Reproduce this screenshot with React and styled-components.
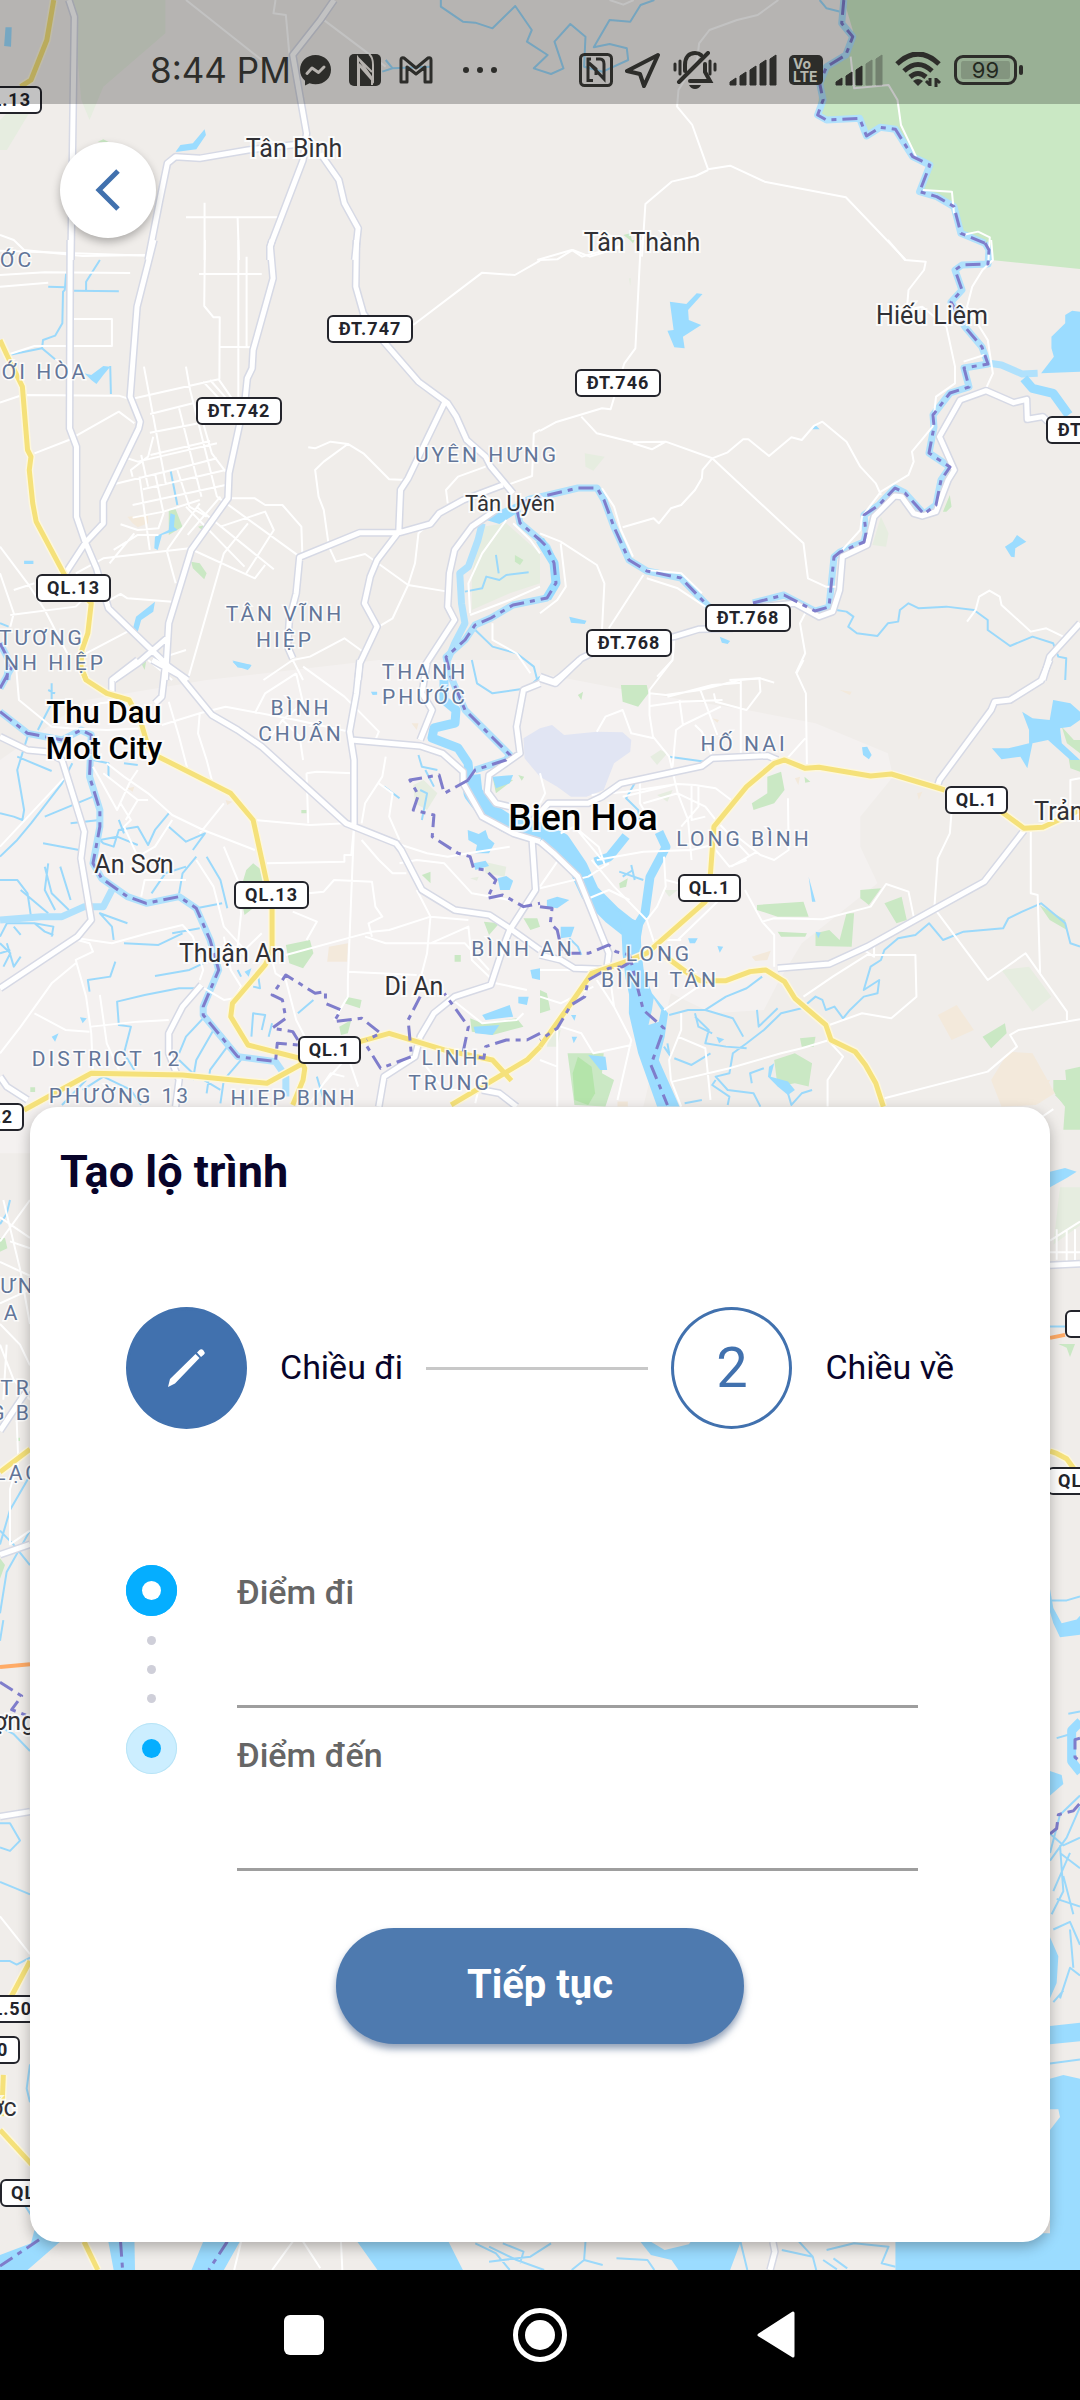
import React from "react";
import styled, { createGlobalStyle } from "styled-components";

const GlobalStyle = createGlobalStyle`
  *, *::before, *::after { box-sizing: border-box; }
  body { margin: 0; background: #f0edea; font-family: Roboto, "Liberation Sans", sans-serif; }
  button, input { font: inherit; }
`;

/* ---------- map data: each tile has an origin and a scale ---------- */

const TILES = [
  {
    id: "north", x: 0, y: 0, sx: 0.6888, sy: 0.3333,
    park: "M1225,0 1238,90 1240,130 1228,165 1195,200 1190,260 1187,345 1197,365 1248,355 1258,408 1278,382 1300,385 1325,470 1350,495 1335,575 1385,605 1395,700 1437,740 1439,780 1568,807 1568,0ZM142,425 150,418 160,428ZM905,705 915,700 918,725Z",
    pale: "M105,0 240,0 240,100 150,260 130,360 118,300ZM10,340 45,330 10,450 0,450 0,360Z",
    water: "M255,455 262,435 280,430 297,388 299,405 285,448 258,455ZM8,82 17,82 16,140 6,138Z",
    stream: "M640,0 640,20 672,65 690,68 715,85 748,18 772,90 765,125 795,165 775,205 800,222 818,205 805,125 828,72 850,110 848,200 875,215 912,180 910,145 885,132 862,142 885,60 915,65 930,15 950,0M1190,0 1200,25 1220,35M560,180 570,205 625,200M555,215 570,205",
    river: "M1225,0 1222,70 1238,110 1228,165 1200,200 1190,250 1195,300 1187,345 1200,360 1248,355 1258,408 1278,382 1300,388 1325,470 1350,495 1335,575 1360,590 1385,620 1395,700 1430,730",
    border: "M1225,0 1222,70 1238,110 1228,165 1200,200 1190,250 1195,300 1187,345 1200,360 1248,355 1258,408 1278,382 1300,388 1325,470 1350,495 1335,575 1360,590 1385,620 1395,700 1430,730",
    major: "M100,0 108,50 103,780M485,0 465,60 425,165 445,400 440,480 392,740 392,780M445,430 360,450 290,475 255,470 243,490 232,600 215,780M465,460 492,540 500,610 520,685 515,780",
    yellow: "M78,0 68,120 45,240 30,260",
    minor: "M270,0 380,180M400,0 397,40 415,45 420,160M467,55 560,200M1130,0 1100,45 1070,60 1030,90 1015,130 1012,180 985,270 983,320 1005,375 1028,508 1060,497 1110,545 1228,592 1315,780M1028,510 1010,528 975,545 937,612 932,770M297,608 297,780M270,652 407,652M345,655 347,780M0,705 20,720 35,750 120,768 213,765M1235,170 1240,265 1290,255 1303,300 1308,375 1330,470M1340,570 1382,575 1385,640M1398,705 1420,695 1437,712 1435,780M780,780 830,750 845,770 905,735M885,0 905,14 920,0",
  },
  {
    id: "west", x: 0, y: 240, sx: 0.3444, sy: 0.3333,
    park: "M490,810 510,808 530,860 490,885ZM555,965 580,970 600,1000 593,1018 560,985ZM1495,945 1520,960 1510,975 1495,965ZM410,1270 425,1260 420,1290ZM575,860 595,855 590,872Z",
    pale: "M1400,860 1470,850 1568,940 1568,1030 1480,1060 1370,1110 1370,1000Z",
    sand: "M370,830 430,825 430,850 400,862 385,850Z",
    water: "M245,400 265,405 300,378 320,380 300,405 280,432 265,420ZM495,820 508,825 505,860 515,870 470,885 458,930 448,925 450,890 490,870ZM450,1085 445,1115 410,1140 400,1175 385,1170 395,1130ZM675,1262 730,1275 725,1285 690,1283ZM70,962 97,962 97,972 70,972ZM1395,835 1430,820 1510,785 1500,820 1450,852Z",
    stream: "M290,60 250,125 250,150M215,152 345,154M140,140 190,142M192,100 188,150 183,155 181,250 160,287 125,300 122,325 25,345M122,325 160,358M213,237 300,237M320,378 322,462M495,690 515,795M1350,1055 1400,1045 1412,1010 1450,1020 1470,1005 1535,997M1440,945 1448,1000M0,1150 25,1160M1380,1170 1430,1220 1500,1240 1550,1280 1560,1320",
    river: "M1400,850 1388,900 1360,980 1335,1000 1340,1090 1350,1150 1320,1210 1300,1260M0,1210 25,1260 20,1320",
    border: "M0,1210 25,1260 20,1320",
    major: "M204,0 202,565 222,620 222,830 245,900 280,985 315,1105 490,1280 545,1320M447,0 398,200 378,470 407,545 403,565 300,785 300,850 250,905 190,1000M790,0 785,20 793,115 735,330 732,385 718,415 712,475 665,700 662,775 555,930 490,1150 480,1320M1035,0 1033,140 1055,220 1110,300 1215,425 1300,490 1325,530 1355,600 1410,650 1425,680 1490,760M1290,490 1185,715 1163,750 1158,875 1095,960 1075,1010 1058,1090 1095,1160 1045,1270 1040,1320M1158,878 1045,878 870,952 860,1060 840,1140 835,1220 850,1255M1160,878 1250,852 1275,820 1345,780 1460,735M1440,810 1370,860 1320,930 1305,1000 1300,1100 1320,1140 1235,1275M490,1190 400,1270 330,1320",
    yellow: "M0,300 20,345 65,440 80,630 90,650 85,690 95,790 105,845 190,1010 265,1090 255,1180 238,1230 235,1280 250,1320",
    minor: "M0,105 130,97 378,99M0,140 140,128M0,32 430,47M0,488 65,465 345,467 378,478 635,418 690,500M637,418 638,232 620,232 593,198 595,0M692,0 692,470M716,50 716,320M578,102 760,102M640,320 735,322M213,237 325,237 325,318 100,318 20,345M100,640 200,600 345,515 390,550M418,380 482,735M540,380 552,450 630,770M590,550 615,640 655,695M520,505 585,770M436,522 560,490M435,578 600,545M437,645 610,603M370,655 400,665 630,610M333,732 500,690 630,655M415,748 655,690M385,795 655,735M405,710 435,930M410,645 430,740M445,590 430,650 380,690 385,710M350,853 400,870 460,865 475,820 450,700M385,833 475,815 580,780M330,930 400,885 460,885M318,970 390,880M540,800 710,980M570,800 795,988M560,930 740,1015 770,975M485,930 580,790M545,885 640,770M515,690 550,800 600,830M630,770 870,950M655,775 740,775 770,795 820,795 875,860 878,945M640,860 770,815 795,870 740,960 715,1000M720,850 650,940 545,1320M220,1000 300,955 550,925M485,935 510,1030M500,1085 370,1075 350,1062 310,1085M895,622 915,625 960,605 1010,612 1055,640 1130,718 1180,720M1010,612 940,665 915,690 925,770 940,810 955,920 975,965 1060,942 1185,1035 1300,1055M1200,255 1400,98 1495,105 1568,62M1100,1160 1140,1135 1185,1035 1205,970 1215,880 1270,830M1300,790 1295,750 1330,710 1410,680M1460,740 1545,708 1550,580 1568,570M0,920 80,1030 130,1110 195,1240M0,1000 20,1060 40,1120 30,1160M30,1125 220,1100 260,1060M40,1050 100,1030M250,1240 370,1175M590,425 640,480M610,420 670,490M765,1320 850,1260 900,1250 1000,1195 1060,1240M850,1260 880,1320M1470,840 1400,940 1360,1030 1365,1120M1490,850 1540,900 1568,940M1365,1125 1480,1080 1568,1040M1430,1150 1430,1200 1500,1240 1540,1300M480,1250 540,1230",
  },
  {
    id: "east", x: 540, y: 240, sx: 0.3444, sy: 0.3333,
    park: "M1170,815 1190,765 1195,800 1180,815ZM262,0 275,0 270,10Z",
    pale: "M965,915 990,830 1012,880 1005,920ZM130,640 188,650 155,692 132,680ZM258,115 264,115 262,138Z",
    water: "M377,185 425,192 455,160 472,162 430,210 432,240 468,255 415,290 420,325 390,322 370,272 388,270ZM1568,215 1545,212 1525,225 1525,250 1485,290 1485,325 1492,350 1455,400 1568,395ZM1350,920 1372,905 1385,885 1412,905 1380,925 1378,952 1368,950ZM790,568 800,555 812,568ZM85,1130 135,1142 130,1152 90,1148ZM522,1190 552,1203 545,1212 528,1208Z",
    stream: "M860,1110 890,1115 910,1130 895,1160 920,1180 980,1188 1010,1150 1040,1145 1045,1110 1070,1090 1100,1105 1180,1100 1260,1110 1300,1140 1300,1170 1365,1218 1430,1190 1490,1210 1505,1250 1528,1255 1525,1320",
    river: "M1305,370 1340,375 1400,402 1445,400",
    wide: "M1405,415 1430,445 1490,460 1535,525",
    major: "M0,1310 40,1325 60,1310 120,1255 200,1215 390,1190 460,1168 560,1165M640,1100 740,1090 810,1130 850,1115 870,1050 878,950 950,915 970,830 1030,768 1050,770 1085,820 1110,828 1150,815 1185,720 1203,690 1160,590 1220,480 1295,452 1375,488 1413,478 1415,538 1460,530 1475,545M1568,1150 1480,1250 1460,1320",
    minor: "M0,573 45,547 180,505 205,508 245,370 277,325 293,0M120,530 165,580 270,607 365,605 500,655 765,910 778,1015 830,1040 870,1040M270,610 325,628 365,605M500,655 545,637 590,598 605,598 665,648 730,592 760,600 795,558 820,545 890,605 930,680 975,730 990,765M500,655 472,690 470,715 450,750 410,795 380,805 345,850 330,835 240,862M0,60 50,58 95,30 145,50 240,20M1010,0 1060,60 1120,65 1115,90 1070,150 1065,210 1110,200 1180,260 1205,380 1205,430 1150,470 1140,560 1080,635 1085,665 1070,705 990,755 935,830 930,870 860,950M1310,0 1315,60 1285,90 1255,140 1240,200 1300,300 1315,400 1295,445M1230,365 1290,345M0,880 60,905 165,975 187,1030 180,1170M60,910 75,1040 50,1080 0,1120M300,1005 200,1165M180,745 215,800 235,870 270,950M310,1015 400,1045 480,1100M770,1120 755,1150 770,1240 743,1300M390,1200 385,1260 340,1310M1240,1145 1265,1110 1275,1070 1305,1052 1335,1070 1340,1095 1425,1175 1470,1165 1530,1195M550,1320 640,1315M310,990 410,1000 470,1060",
  },
  {
    id: "southwest", x: 0, y: 660, sx: 0.3444, sy: 0.3333,
    urban: "M0,300 250,120 600,60 1100,0 1568,0 1568,1480 0,1480Z",
    park: "M735,610 760,630 775,665 705,665 715,630ZM705,740 740,740 710,765ZM830,855 900,840 910,880 880,925 840,910ZM1225,645 1250,635 1250,670ZM1405,785 1450,790 1420,825ZM1520,775 1560,775 1568,800 1540,810ZM1005,1010 1050,1020 1045,1045 1000,1030ZM985,1100 1020,1080 1010,1120 990,1125ZM1365,1075 1400,1090 1500,1075 1520,1100 1430,1125 1370,1115ZM1430,350 1440,400 1490,360ZM1320,885 1338,885 1338,905 1320,905ZM875,450 890,450 890,460 875,460ZM88,1282 102,1282 102,1296 88,1296ZM1505,345 1522,350 1515,362Z",
    pale: "M1200,375 1230,360 1270,400 1240,450 1205,430ZM1405,605 1470,620 1465,650 1410,640ZM1365,655 1390,650 1385,662Z",
    sand: "M955,860 1010,850 1008,905 950,905ZM370,385 390,380 385,395ZM655,420 675,425 660,435ZM1195,190 1215,190 1210,210Z",
    water: "M1358,510 1390,522 1410,510 1418,535 1436,550 1420,580 1380,580 1385,555 1360,540ZM1445,655 1470,648 1490,662 1480,690 1452,690ZM1430,350 1490,345 1480,370 1440,385ZM1400,1065 1480,1035 1490,1070 1410,1080ZM1375,1100 1450,1095 1430,1125 1380,1120ZM1505,1010 1535,1010 1530,1035 1505,1030ZM1540,930 1568,925 1568,960 1545,955ZM675,5 730,15 720,30 690,20ZM232,1072 252,1075 240,1090ZM150,1130 170,1120 160,1145ZM1375,610 1410,602 1420,618 1380,630ZM1077,95 1095,95 1095,104 1082,105ZM710,935 730,925 722,950Z",
    stream: "M0,460 40,470 65,480 70,450 50,330 80,230M0,590 50,540 90,490 180,370 210,310M50,290 150,333M205,490 290,480M125,550 230,570M130,470 270,410M0,830 20,790 100,790 155,800 150,830M20,850 40,920 60,890M0,660 50,660 80,700 90,770M60,690 140,760M130,620 150,700 200,750M175,620 205,720M140,610 130,690 160,750M100,790 130,815 155,825M40,800 60,825M290,540 300,550 330,560 345,510 400,500 430,555 450,510 490,460M290,540 340,530 400,555M345,480 360,520M490,500 540,545 595,520 560,570M570,590 530,640 520,700M600,590 640,660 660,745M570,745 645,730M440,700 480,640 540,620M360,850 460,855 530,820M580,805 500,820M450,948 550,930 590,910M335,905 320,950 255,960 260,995M590,985 520,985 420,1005 340,1025 345,1095 380,1100 360,1180 390,1230M330,840 325,800 290,760 370,790M730,1130 735,1060 770,1065 760,1110M780,1130 790,1090M735,980 755,985 750,950M690,930 700,950M865,1060 910,1020M240,1290 300,1250 380,1290 410,1335M590,1075 540,1130 520,1180M620,1110 570,1200 560,1260M660,1160 610,1230 600,1300M700,1200 650,1260 640,1330M180,1335 250,1260M920,1250 940,1320M1115,380 1160,415M1215,285 1225,320 1270,330M1220,390 1240,400 1225,480M1235,330 1260,380M110,210 150,130 150,70M140,90 160,100M1370,0 1385,70 1430,100 1530,85 1568,50M270,300 315,310 315,350M0,850 30,880 10,920M360,310 400,315M0,880 30,870M520,1200 560,1240 640,1290",
    river: "M0,85 35,20M0,155 80,220 180,240 235,210 265,225 260,350 290,450 290,500 270,610 295,655 370,710 425,730 520,710 570,745 610,840 635,930 590,1040 590,1065 690,1190 800,1205 830,1250 830,1310M0,780 120,770 180,770 245,740 300,740 325,690",
    border: "M0,85 35,20M0,155 80,220 180,240 235,210 265,225 260,350 290,450 290,500 270,610 295,655 370,710 425,730 520,710 570,745 610,840 635,930 590,1040 590,1065 690,1190 800,1205 805,1150 865,1155M865,1140 850,1115 790,1105 830,1075 820,1020 790,1005 830,945 915,1000 945,995 945,1030 990,1050 970,1085 1050,1075 1105,1120 1065,1140M1360,360 1290,400 1275,345 1190,360 1215,405 1200,450 1260,465 1255,530 1330,580 1365,590 1375,625 1410,630 1440,660 1415,715 1460,705 1520,740 1568,730M1568,1120 1530,1140 1470,1140 1410,1160 1405,1195 1390,1192M1345,1175 1360,1100 1290,1000M1220,1010 1185,1080 1195,1190 1105,1225 1060,1150",
    major: "M442,0 520,45 615,165 690,210 760,260 1005,490 1150,550 1165,570 1225,690 1320,750 1420,765 1480,805 1568,870M482,0 470,110 450,130M400,0 325,60 325,95M1045,0 1035,100 1015,215 1028,300 1028,500M1020,240 1220,258 1285,280 1345,335 1345,370 1400,470 1490,520 1568,545M1240,10 1225,100 1255,150 1220,240M1568,70 1520,90 1500,200 1510,280 1420,345 1415,395 1440,430 1480,440M1545,540 1555,690 1480,810 1465,850 1425,975 1320,1010 1260,1060 1220,1130 1205,1190 1115,1250 1100,1340M0,230 80,270 135,275 180,300 245,515 235,595 265,780 225,830 0,985M585,975 530,1040 490,1120 490,1180 520,1260 510,1340M0,1250 20,1280 80,1320M1400,1290 1450,1300 1500,1340",
    yellow: "M240,35 250,60 310,100 375,120 410,190 430,260 460,290 670,400 735,480 790,740 790,870 770,915 675,1030 670,1070 720,1155 870,1195 885,1225 880,1260 850,1335M70,1350 185,1285 265,1240 530,1245 775,1270 880,1210M1045,1145 1130,1120 1290,1170 1430,1200 1485,1262M1310,1335 1530,1200 1568,1160",
    minor: "M45,0 55,120 150,200 200,205 310,210 420,205M225,160 290,130 375,120M470,195 580,160 655,140 860,180 1015,215M490,125 520,230 545,330M580,160 575,220 600,300 620,380M310,310 360,350 430,400 500,465 590,510 740,570M270,320 340,450 380,360 400,330M365,480 400,420 430,420M350,430 380,480 360,500 400,590M500,480 450,560 400,590M650,430 580,520M740,480 900,495 1005,490M860,40 770,100 740,160M860,40 880,130 820,180 780,240M880,20 1000,110 1100,215 1090,240M820,180 870,230 880,300M890,340 920,335 1025,340M890,340 895,490M1120,290 1110,350 1060,430 1050,490M1100,370 1140,400 1130,470 1160,540M775,610 1000,605 1000,585 1020,585 1028,500 1010,960 1010,1010 970,1080M895,700 940,695 970,660 1080,665 1090,740 1110,770 1070,790 1080,830M830,885 1080,815 1130,810 1250,770 1360,780M1060,830 1120,850 1350,850 1420,930M850,755 920,785 890,840M1150,550 1240,580 1300,590 1360,580 1480,560M1160,610 1210,600 1290,610 1370,700 1480,720M1210,690 1250,770 1240,880 1210,1000M1250,850 1360,800 1370,900 1440,970 1530,990M1010,935 1210,945M1050,540 1100,600 1140,640 1180,640M650,560 690,660 700,760 690,860 720,900M570,600 620,680 650,800 720,880M430,820 530,795 560,830 590,930 580,960M225,835 325,850 430,820M225,840 260,850 270,875 220,900 250,1010 265,1120 270,1240M220,910 150,970 60,1100 0,1180M100,1060 190,1110 260,1115M265,1100 400,1085 490,1080M290,1005 310,1150 350,1240M0,560 190,350M410,710 420,660 540,660M585,980 650,1020 680,1015 700,980 670,930 650,830M830,960 860,1080 890,1140M790,900 800,940 830,960M760,820 700,880M1290,1000 1400,1090 1500,1080 1520,1060M940,1270 1010,1190 1040,1280M900,1330 960,1240 1000,1250M1230,1210 1290,1290 1340,1290M1400,1240 1380,1330M300,340 400,420M430,0 500,60",
  },
  {
    id: "southeast", x: 540, y: 660, sx: 0.3444, sy: 0.3333,
    urban: "M0,40 300,100 600,150 800,190 1010,280 1025,350 930,470 930,560 980,670 760,850 690,970 650,1050 500,1060 380,1000 300,1340 0,1340Z",
    lavender: "M-48,235 0,205 35,195 70,225 165,215 240,217 265,240 262,275 215,310 185,390 135,410 90,410 50,380 0,350 -45,295Z",
    park: "M235,75 310,75 315,100 285,140 240,125ZM110,105 125,95 120,120ZM660,350 700,335 710,390 680,430 620,450 615,430 660,400ZM630,735 765,725 780,770 690,770 630,750ZM690,815 775,820 770,830 700,830ZM890,760 912,760 905,860 800,858 800,820 840,810 870,840ZM930,690 990,685 955,735 930,715ZM1000,730 1050,710 1065,780 1035,790ZM1285,1130 1350,1090 1355,1120 1310,1165ZM80,1180 185,1180 180,1240 215,1260 190,1340 100,1335ZM680,1200 740,1180 790,1210 780,1280 740,1270 690,1280ZM1568,1220 1525,1230 1530,1290 1495,1305 1568,1380ZM1340,1220 1370,1190 1418,1265 1390,1260ZM1515,200 1550,240 1568,240 1568,280 1530,250ZM1535,295 1568,300 1568,335 1540,325ZM1450,735 1525,780 1530,810 1480,780ZM755,1135 800,1130 795,1160 760,1160ZM0,990 20,1000 30,1050 0,1060ZM230,670 255,655 250,680 232,685ZM768,350 785,365 770,368Z",
    deep: "M110,1190 150,1220 160,1300 140,1335 100,1320 95,1240Z",
    pale: "M1340,930 1420,920 1485,1010 1430,1055ZM320,290 350,270 370,280 340,315ZM340,405 385,390 370,425ZM360,690 400,690 375,710ZM25,1120 60,1110 50,1160 20,1160Z",
    sand: "M1155,1065 1210,1035 1260,1110 1195,1140ZM1310,1260 1360,1175 1430,1180 1495,1300 1440,1335 1340,1340ZM615,890 670,872 660,900 625,903ZM870,90 905,95 900,105ZM1095,400 1110,395 1100,420ZM500,175 520,180 515,188ZM740,355 755,350 750,375ZM225,1325 255,1325 255,1340 225,1340Z",
    water: "M1400,155 1430,175 1480,180 1490,120 1540,130 1568,155 1568,180 1540,200 1510,205 1515,250 1568,300 1540,300 1475,240 1430,250 1415,325 1395,290 1340,298 1312,265 1360,265 1420,250 1420,210ZM935,262 950,260 963,285 955,298 938,285ZM20,720 50,710 85,720 50,745 20,740ZM60,800 100,800 90,830 60,835ZM430,835 458,835 450,850 435,850ZM515,858 532,860 522,878ZM780,650 800,725 790,725ZM140,1185 190,1190 195,1230 175,1230ZM260,930 300,930 325,1000 372,1060 362,1130 345,1200 405,1340 340,1340 285,1180 258,1060ZM135,640 150,690 230,760 245,880 285,880 300,790 250,770 165,705ZM90,1065 105,1065 100,1082ZM92,1130 108,1130 98,1150ZM512,1130 535,1138 520,1150ZM665,1220 680,1210 670,1250 720,1265 740,1290 720,1305 690,1280 662,1250ZM800,815 815,818 808,835Z",
    island: "M330,1015 352,1050 345,1085 315,1095 325,1050Z",
    stream: "M1568,860 1540,850 1525,790 1455,730 1400,755 1360,775 1345,805 1230,815 1170,840 1130,790 1090,825 1040,835 1000,870 990,900 960,920 940,990 985,960 980,1000 940,1010 900,1050 880,1075 855,1040 830,1050 820,1020 800,1010 760,1045 700,1060 650,1110 600,1150 560,1180 550,1240 510,1250 545,1290 620,1300 640,1340M510,1260 500,1275 550,1310 545,1335M375,1065 430,1050 480,1050 560,1075 590,1130M450,1070 490,1110 480,1150 540,1160 600,1165M450,1060 460,1100 500,1120M480,1050 540,1010 600,985 645,950M630,1050 635,1100 690,1045M390,1195 440,1215 495,1180M720,1300 730,1335 760,1300 790,1290M615,1270 610,1240 650,1225M420,1330 470,1320M375,290 480,305M275,370 250,415 285,450 290,480M230,635 300,660M265,615 275,660M240,650 270,630M360,1160 380,1190M370,1150 375,1180M85,835 110,860 120,885",
    border: "M0,740 35,745 30,790 50,810 65,880 140,880 200,855 220,875 260,885 280,970 300,1050 360,1105 322,1215 370,1335M265,905 240,920 200,925 140,960 130,1010 90,1035 50,1105 0,1140",
    major: "M0,55 45,70 115,0M-20,480 25,430 140,430 180,410 235,370 470,318 500,295 660,287 690,300M0,545 40,580 110,650 200,880 195,920M0,885 60,900 100,925 180,928M690,925 840,912 950,860 1150,745 1290,665 1405,512M1155,375 1160,360 1310,150 1320,125 1365,120 1455,62 1480,0",
    yellow: "M0,1160 90,1030 150,940 250,905 310,880 480,725 495,640 505,500 600,380 680,310 710,300 770,325 810,322 960,348 1020,342 1175,390M1340,455 1405,505 1460,502 1568,450M365,890 430,940 465,962 540,962 610,935 655,930 710,965 740,1015 830,1095 845,1140 915,1175 945,1215 975,1270 997,1340",
    minor: "M385,0 318,90 318,165 328,230 375,290 400,400M318,100 365,105 465,90 580,60 640,55 680,68M320,138 405,125 530,120M370,110 500,75 585,68M465,88 515,225M583,60 583,285M405,120 415,195 395,210 385,320M415,195 525,140M505,100 510,125 600,150 640,95 637,55M765,0 745,40 772,100 775,320M718,295 770,235M165,215 190,170 240,150 265,220 330,235M450,195 470,215 500,290M150,405 250,395 400,372 450,375 510,385 555,420M240,410 385,375M290,360 290,430 330,500M300,430 400,400 480,440 510,480 610,590M400,400 430,480 440,600M440,375 440,480 480,470M460,380 460,440 410,500M555,620 630,575M720,415 722,570 680,600 640,585 560,520M165,600 300,575 440,570 500,555M365,660 440,680M360,590 365,680 340,740 310,780 335,860M150,600 215,680 310,780M100,500 180,600M60,520 100,500 170,560 190,620M595,690 645,785 680,825 680,920M645,785 680,775 820,778 960,740 1005,672 1070,695 1085,770M400,840 520,720 580,680M335,840 410,840M1195,455 1190,520 1155,595 1145,745 1300,960 1410,880 1530,1055 1530,1080M1425,510 1425,700 1445,705 1452,940M1568,1078 1390,1110 1365,1125 1385,1160 1300,1235 1000,1315M765,1010 850,950 950,885 1090,885 1093,1010 1020,1075 935,1060 840,1095M400,1130 480,1165 495,1320M385,1265 550,1225 700,1180 760,1165 840,1140M840,1145 880,1190 835,1260 835,1340M410,1060 410,1110 375,1200 380,1260 410,1340M165,960 215,1040 265,1140 225,1320M60,1100 120,1120 155,1180 265,1155M50,1110 50,1340M0,680 60,590M0,685 140,650 200,610M130,720 200,690 260,720M940,870 970,890 970,850M360,1050 460,980M1540,440 1540,360 1568,355M0,340 15,400 0,430M510,570 550,620 600,600M0,930 60,930 200,930 215,1040M0,1200 50,1220M155,980 60,1030 0,1010",
  },
  {
    id: "left-edge", x: 0, y: 1200, sx: 0.3333, sy: 0.6888,
    park: "M0,55 15,55 22,70 0,75ZM0,520 15,530 0,550ZM50,345 60,345 60,350 50,350Z",
    minor: "M0,60 90,0M0,90 90,110M0,180 60,210 90,240M10,0 60,100 90,180M0,210 40,260 90,290M0,1040 90,1095M50,320 55,380 30,420 30,500 90,480M0,150 90,130M30,60 90,70M0,25 90,55M20,210 10,290",
    major: "M0,515 90,500M0,335 90,270M0,895 90,888",
    yellow: "M0,395 90,362M30,1160 90,1105M0,1350 95,1400M10,1270 5,1330",
    orange: "M0,678 90,674",
    stream: "M0,35 20,20 30,0M0,600 20,540 90,480M0,500 30,450 90,400M0,480 40,500 90,530M0,905 30,905 60,930 30,945 0,940M0,990 40,998 90,1008M0,1105 30,1105 50,1110 90,1100M90,1255 80,1290 90,1310M95,1475 35,1430M0,640 10,610M0,765 40,775 90,800",
    border: "M0,700 65,720 35,740 90,750",
  },
  {
    id: "right-edge", x: 1020, y: 1080, sx: 0.3333, sy: 0.7653,
    park: "M100,0 180,0 180,65 130,65 135,35 100,15ZM115,345 165,345 150,362 140,350Z",
    pale: "M120,140 180,140 180,190 100,215Z",
    sand: "M0,0 90,0 60,30 0,30Z",
    water: "M90,120 135,115 170,120 140,128 90,140ZM90,665 100,690 125,710 170,705 180,700 180,725 120,728 100,710 90,695ZM90,903 125,908 130,920 90,935ZM90,1120 115,1145 110,1180 90,1200ZM90,1236 180,1232 180,1256 90,1260ZM90,1305 130,1300 180,1305 180,1568 90,1568Z",
    island: "M90,1345 115,1345 120,1355 90,1372Z",
    minor: "M90,210 180,185M90,225 180,225M110,195 110,235M140,195 140,240M165,195 165,240M60,50 100,38",
    major: "M90,242 180,240",
    orange: "M90,337 135,333",
    yellow: "M90,485 110,488 140,495 165,510",
    stream: "M90,322 135,322M95,680 140,680 180,675M110,860 150,855M145,828 180,825M90,1010 120,960 180,935M90,1020 140,990 180,950M100,1060 150,1010M110,1070 180,1080M100,1110 150,1100 180,1130M130,1040 160,1090M120,1200 150,1160 180,1170M100,1205 130,1190M90,1285 180,1280M120,1010 180,1030M95,1090 130,1060 120,1000M150,1110 160,1160M90,985 130,1000 180,990",
    wide: "M182,838 155,850 155,890 182,905",
    border: "M180,860 165,862 165,885 180,890M90,985 110,978 115,960 160,955 180,945",
  },
  {
    id: "south", x: 0, y: 2180, sx: 0.6888, sy: 0.3333,
    water: "M0,225 45,190 50,150 90,180 40,270 0,270ZM155,160 195,160 196,270 165,270ZM300,160 355,160 325,270 278,270ZM510,160 645,160 672,270 548,270ZM920,160 1080,160 1060,270 985,270 975,240 945,225ZM1300,160 1568,160 1568,270 1300,270Z",
    island: "M945,185 1003,185 1000,193 965,210Z",
    pale: "M1450,205 1462,185 1456,215Z",
    minor: "M350,185 340,270M425,185 395,270M440,185 465,265M495,185 497,270",
    major: "M1122,185 1125,215 1118,270",
    yellow: "M122,185 142,270",
    stream: "M850,185 848,240 830,270M690,190 720,220 740,270M710,200 750,240 790,270M800,190 770,230 710,245M730,190 760,215 755,250M848,240 875,255M895,235 940,240 950,270M1075,185 1085,270M1135,210 1180,230 1185,270M1200,210 1240,190 1290,200 1280,250 1300,260M1160,185 1180,230M1195,240 1215,268M1210,235 1230,265M1395,185 1435,270",
    border: "M0,258 60,175M175,185 178,270M330,185 303,270",
  },
  {
    id: "rivers", x: 0, y: 0, sx: 1, sy: 1,
    river: "M517,505 530,499 540,497 578,488 597,488 604,500 614,527 629,560 647,571 681,578 709,607M753,603 784,595 815,611 829,607 834,557 840,552 864,542 866,533 864,515 879,505 895,488 905,493 924,514 936,505 941,480 950,467 929,453 934,427 933,415 950,393 969,387 964,368 988,364 982,347 965,327 951,302 962,290 955,270 962,265 988,264 989,250 985,243M517,510 520,523 540,540 547,547 554,563 556,583 547,598 513,605 491,618 475,625 465,640 446,657 451,677 465,710 492,737 510,755 506,760 475,770",
    wide: "M444,680 444,700 456,710 455,723 434,728 432,738 458,748 468,763 470,780M659,832 666,847 650,877 645,913 633,933M626,836 609,857 595,862M540,540 554,563 556,583 547,598",
    broad: "M471,775 473,793 486,810 506,823 540,832 561,842 578,867 590,893 612,915 631,930 632,953 635,977 640,1000",
    border: "M517,505 530,499 540,497 578,488 597,488 604,500 614,527 629,560 647,571 681,578 709,607M753,603 784,595 815,611 829,607 834,557 840,552 864,542 866,533 864,515 879,505 895,488 905,493 924,514 936,505 941,480 950,467 929,453 934,427 933,415 950,393 969,387 964,368 988,364 982,347 965,327 951,302 962,290 955,270 962,265 988,264 989,250 985,243M517,510 520,523 540,540 547,547 554,563 556,583 547,598 513,605 491,618 475,625 465,640 446,657 451,677 465,710 492,737 510,755 506,760 475,770 468,780",
  },
];

const LAYERS = [
  { key: "urban", fill: "#f4f1f0" },
  { key: "lavender", fill: "#e1e5f3" },
  { key: "pale", fill: "#e6ede0" },
  { key: "park", fill: "#cae8c4" },
  { key: "deep", fill: "#b4e4aa" },
  { key: "sand", fill: "#f3e9db" },
  { key: "stream", stroke: "#9bd9fb", width: 2 },
  { key: "river", stroke: "#b0e1fc", width: 7 },
  { key: "wide", stroke: "#9bdcff", width: 9 },
  { key: "broad", stroke: "#9bdcff", width: 19 },
  { key: "water", fill: "#9bdcff" },
  { key: "island", fill: "#f0edea" },
  { key: "minor", stroke: "#ffffff", width: 2 },
  { key: "major", stroke: "#d6d9e5", width: 8 },
  { key: "major", stroke: "#ffffff", width: 5 },
  { key: "yellow", stroke: "#fdf7dc", width: 8 },
  { key: "yellow", stroke: "#f5e17a", width: 5 },
  { key: "orange", stroke: "#ffab66", width: 4 },
  { key: "border", stroke: "#7f7dcb", width: 3, dash: "15 6 5 6" },
];

const PLACES = [
  [294, 157, "Tân Bình"], [642, 251, "Tân Thành"], [932, 324, "Hiếu Liêm"],
  [134, 873, "An Sơn"], [232, 962, "Thuận An"], [414, 995, "Di An"], [1066, 820, "Trảng"],
  [510, 511, "Tân Uyên", "small"], [10, 1730, "rợng"], [3, 2116, "ớc"],
  [104, 723, "Thu Dau", "town"], [104, 759, "Mot City", "town"], [583, 830, "Bien Hoa", "city"],
];

const DISTRICTS = [
  [285, 621, "TÂN VĨNH"], [285, 647, "HIỆP"], [301, 715, "BÌNH"], [301, 741, "CHUẨN"],
  [425, 679, "THẠNH"], [425, 704, "PHƯỚC"], [487, 462, "UYÊN HƯNG"], [17, 267, "ỚC"],
  [45, 379, "ỚI HÒA"], [42, 645, "TƯƠNG"], [55, 670, "NH HIỆP"], [744, 751, "HỐ NAI"],
  [744, 846, "LONG BÌNH"], [659, 961, "LONG"], [660, 987, "BÌNH TÂN"], [523, 956, "BÌNH AN"],
  [451, 1065, "LINH"], [450, 1090, "TRUNG"], [107, 1066, "DISTRICT 12"], [120, 1103, "PHƯỜNG 13"],
  [294, 1105, "HIEP BINH"], [18, 1293, "ƯN"], [12, 1320, "A"], [16, 1395, "TR"], [11, 1420, "G B"], [18, 1480, "LẠC"],
];

const SHIELDS = [
  [328, 316, 84, "ĐT.747"], [197, 398, 84, "ĐT.742"], [37, 575, 73, "QL.13"], [576, 370, 84, "ĐT.746"],
  [1047, 417, 84, "ĐT.768"], [706, 605, 84, "ĐT.768"], [587, 630, 84, "ĐT.768"], [235, 882, 73, "QL.13"],
  [299, 1037, 61, "QL.1"], [679, 875, 61, "QL.1"], [946, 787, 61, "QL.1"], [-32, 87, 73, "QL.13"],
  [-50, 1104, 73, "QL.22"], [-31, 1996, 73, "QL.50"], [-65, 2037, 84, "ĐT.830"], [1, 2180, 73, "QL.50"],
  [1066, 1311, 84, "QL.51"], [1048, 1468, 73, "QL.51"],
];

/* ---------- page shell ---------- */

const Screen = styled.div`
  display: flex;
  flex-direction: column;
  min-height: 100vh;
`;

const Main = styled.main`
  position: relative;
  isolation: isolate;
  flex: 1;
  display: flex;
  flex-direction: column;
  overflow: hidden;
`;

const MapCanvas = styled.svg`
  position: absolute;
  inset: 0;
  z-index: -1;
  width: 100%;
  height: 100%;
  background: #f0edea;

  path { vector-effect: non-scaling-stroke; stroke-linejoin: round; }
`;

const PLACE_STYLES = {
  normal: { size: 25, weight: 400, color: "#303035" },
  small: { size: 22, weight: 400, color: "#303035" },
  town: { size: 31, weight: 500, color: "#000" },
  city: { size: 37, weight: 500, color: "#000" },
};

const Place = styled.text`
  font-family: Roboto, "Liberation Sans", sans-serif;
  font-size: ${({ $kind }) => PLACE_STYLES[$kind].size}px;
  font-weight: ${({ $kind }) => PLACE_STYLES[$kind].weight};
  fill: ${({ $kind }) => PLACE_STYLES[$kind].color};
  stroke: rgba(255, 255, 255, 0.8);
  stroke-width: 4px;
  paint-order: stroke;
  text-anchor: middle;
`;

const District = styled.text`
  font-family: Roboto, "Liberation Sans", sans-serif;
  font-size: 21px;
  letter-spacing: 3px;
  fill: #637699;
  stroke: rgba(255, 255, 255, 0.8);
  stroke-width: 3px;
  paint-order: stroke;
  text-anchor: middle;
`;

const ShieldText = styled.text`
  font-family: Roboto, "Liberation Sans", sans-serif;
  font-size: 18px;
  font-weight: 700;
  letter-spacing: 1px;
  fill: #23242b;
  text-anchor: middle;
`;

const StatusBar = styled.header`
  display: flex;
  justify-content: space-between;
  align-items: center;
  height: 104px;
  padding: 36px 57px 0 150px;
  background: rgba(0, 0, 0, 0.24);
  color: #2d2d2a;

  svg { display: block; flex: none; }
`;

const StatusGroup = styled.div`
  display: flex;
  align-items: center;
  gap: ${({ $gap }) => $gap}px;
`;

const Clock = styled.time`
  margin-right: -9px;
  font-family: Inter, Roboto, sans-serif;
  font-size: 35px;
  line-height: 40px;
  white-space: nowrap;
`;

const VolteBadge = styled.span`
  display: flex;
  flex-direction: column;
  width: 34px;
  height: 30px;
  padding: 2px 4px;
  border-radius: 5px;
  background: #2d2d2a;
  color: #b6b8ae;
  font-family: Inter, Roboto, sans-serif;
  font-size: 14px;
  font-weight: 700;
  line-height: 13px;
`;

const Battery = styled.span`
  display: flex;
  align-items: center;
`;

const BatteryLevel = styled.span`
  display: flex;
  align-items: center;
  justify-content: center;
  width: 63px;
  height: 30px;
  padding: 3px 4px;
  border: 3px solid #2d2d2a;
  border-radius: 9px;
  background: rgba(45, 45, 42, 0.2) content-box;
  color: #23291f;
  font-family: Inter, Roboto, sans-serif;
  font-size: 22px;
  line-height: 18px;
`;

const BatteryTip = styled.span`
  width: 4px;
  height: 10px;
  margin-left: 2px;
  border-radius: 2px;
  background: #2d2d2a;
`;

const BackButton = styled.button`
  display: grid;
  place-items: center;
  width: 96px;
  height: 96px;
  margin: 38px 0 38px 60px;
  padding: 0;
  border: 0;
  border-radius: 50%;
  background: #fff;
  box-shadow: 0 4px 8px rgba(0, 0, 0, 0.28);
`;

const Card = styled.section`
  display: flex;
  flex-direction: column;
  margin: auto 30px 28px;
  padding: 39px 96px 198px;
  border-radius: 27px;
  background: #fff;
  box-shadow: 0 5px 14px rgba(0, 0, 0, 0.28);
`;

const Title = styled.h1`
  margin: 0 0 109px -66px;
  color: #08042a;
  font-size: 45px;
  font-weight: 700;
  line-height: 52px;
`;

const Steps = styled.ol`
  display: flex;
  align-items: center;
  margin: 0;
  padding: 0;
  list-style: none;
`;

const Step = styled.li`
  display: flex;
  align-items: center;
  gap: 33px;
  color: #08042a;
  font-size: 34px;
  line-height: 40px;
  white-space: nowrap;
`;

const StepName = styled.span`
  padding-bottom: 2px;
`;

const StepBadge = styled.span`
  display: grid;
  place-items: center;
  width: 121px;
  height: 122px;
  border: 3px solid #4171ae;
  border-radius: 50%;
  background: ${({ $active }) => ($active ? "#4171ae" : "#fff")};
  color: #4171ae;
  font-size: 56px;
  line-height: 64px;
`;

const StepLine = styled.li`
  flex: 1;
  height: 3px;
  margin: 0 23px;
  background: #c8c8c8;
`;

const RouteForm = styled.form`
  display: flex;
  flex-direction: column;
  margin-top: 136px;
`;

const RouteGrid = styled.div`
  display: grid;
  grid-template-columns: 51px 1fr;
  column-gap: 60px;
  padding-right: 36px;
`;

const RouteTrack = styled.div`
  display: flex;
  flex-direction: column;
  align-items: center;
  gap: 20px;
`;

const Stop = styled.span`
  display: grid;
  place-items: center;
  width: 51px;
  height: 51px;
  border-radius: 50%;
  background: ${({ $end }) => ($end ? "#cceeff" : "#05aeff")};
  box-shadow: inset 0 0 0 1px ${({ $end }) => ($end ? "#b8e4f6" : "#05aeff")};

  &::after {
    content: "";
    width: 19px;
    height: 19px;
    border-radius: 50%;
    background: ${({ $end }) => ($end ? "#05aeff" : "#fff")};
  }
`;

const Dot = styled.span`
  width: 9px;
  height: 9px;
  border-radius: 50%;
  background: #cfcfd9;
`;

const Fields = styled.div`
  display: flex;
  flex-direction: column;
  gap: 27px;
  padding-top: 7px;
`;

const Field = styled.div`
  display: flex;
  flex-direction: column;
`;

const Label = styled.label`
  color: #666;
  font-size: 34px;
  font-weight: 500;
  line-height: 40px;
`;

const Input = styled.input`
  width: 100%;
  height: 96px;
  padding: 0;
  border: 0;
  border-bottom: 3px solid #9e9e9e;
  border-radius: 0;
  outline: 0;
  background: transparent;
  color: #08042a;
  font-size: 34px;
`;

const Submit = styled.button`
  align-self: center;
  width: 408px;
  height: 116px;
  margin-top: 57px;
  padding: 0 0 2px;
  border: 0;
  border-radius: 58px;
  background: #4e7aaf;
  box-shadow: 0 5px 7px rgba(40, 70, 115, 0.5);
  color: #fff;
  font-size: 40px;
  font-weight: 700;
  line-height: 48px;
`;

const NavBar = styled.nav`
  display: flex;
  align-items: center;
  justify-content: center;
  gap: 118px;
  height: 130px;
  background: #000;
`;

const NavButton = styled.button`
  display: grid;
  place-items: center;
  width: 118px;
  height: 100px;
  padding: 0;
  border: 0;
  background: transparent;
`;

function MapView() {
  return (
    <MapCanvas viewBox="0 0 1080 2270" preserveAspectRatio="xMidYMin slice" role="img" aria-label="Bản đồ Biên Hòa">
      {LAYERS.map((layer, i) => (
        <g key={i} fill={layer.fill || "none"} stroke={layer.stroke || "none"} strokeWidth={layer.width} strokeDasharray={layer.dash}>
          {TILES.filter((t) => t[layer.key]).map((t) => (
            <path key={t.id} d={t[layer.key]} transform={`translate(${t.x} ${t.y}) scale(${t.sx} ${t.sy})`} />
          ))}
        </g>
      ))}
      {DISTRICTS.map(([x, y, name]) => (
        <District key={`${x}-${y}`} x={x} y={y}>{name}</District>
      ))}
      {PLACES.map(([x, y, name, kind = "normal"]) => (
        <Place key={name} x={x} y={y} $kind={kind}>{name}</Place>
      ))}
      {SHIELDS.map(([x, y, w, name]) => (
        <g key={`${x}-${y}`}>
          <rect x={x} y={y} width={w} height={26} rx={5} fill="#fff" stroke="#23242b" strokeWidth={2} />
          <ShieldText x={x + w / 2} y={y + 19}>{name}</ShieldText>
        </g>
      ))}
    </MapCanvas>
  );
}

function Signal({ bars }) {
  return (
    <svg width="48" height="32" viewBox="0 0 48 32" fill="currentColor" aria-hidden="true">
      {[7, 13, 19, 25, 30].map((h, i) => (
        <path key={h} opacity={i < bars ? 1 : 0.35} d={`M${i * 10 + 1},${31}V${31 - h + 4}L${i * 10 + 7},${31 - h}V31Z`} stroke="currentColor" strokeWidth="1" strokeLinejoin="round" />
      ))}
    </svg>
  );
}

function StatusIcons() {
  return (
    <StatusBar>
      <StatusGroup $gap={18}>
        <Clock>8:44 PM</Clock>
        <svg width="31" height="31" viewBox="0 0 31 31" aria-hidden="true">
          <path fill="currentColor" d="M15.500 0C6.500 0 0 6.500 0 14.800c0 4.500 1.900 8.300 5 11v4.700l4.500-2.200c2 .7 4 1 6 1 9 0 15.500-6.200 15.500-14.500S24.500 0 15.500 0Z" />
          <path fill="none" stroke="#b6b2ae" strokeWidth="3" strokeLinecap="round" strokeLinejoin="round" d="m7 18.500 5-5.500 6.500 4.500 5.500-5.500" />
        </svg>
        <svg width="32" height="32" viewBox="0 0 32 32" aria-hidden="true">
          <rect width="32" height="32" rx="5" fill="currentColor" />
          <path fill="none" stroke="#b6b2ae" strokeWidth="2" d="M9 32V4l14 20v7M23 24 10 10M10 32V11l14 16V11q0-8-4-11M9 4l14 14" />
        </svg>
        <svg width="34" height="28" viewBox="0 0 34 28" fill="none" stroke="currentColor" strokeWidth="3" strokeLinejoin="round" aria-hidden="true">
          <path d="M2 26V4q0-3 3-2l12 10L29 2q3-1 3 2v22h-6V11l-9 7-9-7v15Z" />
        </svg>
        <svg width="60" height="8" viewBox="0 0 60 8" fill="currentColor" aria-hidden="true">
          <circle cx="15" cy="4" r="3" /><circle cx="29" cy="4" r="3" /><circle cx="43" cy="4" r="3" />
        </svg>
      </StatusGroup>
      <StatusGroup $gap={12}>
        <svg width="34" height="34" viewBox="0 0 34 34" fill="none" stroke="currentColor" strokeWidth="3" aria-hidden="true">
          <rect x="1.500" y="1.500" width="31" height="31" rx="4" />
          <path d="M14 27.500H9V6h3M10 10l7 6v6M17 6h4q4 0 4 5v15L10 10" />
        </svg>
        <svg width="36" height="36" viewBox="0 0 36 36" fill="none" stroke="currentColor" strokeWidth="4" strokeLinejoin="round" aria-hidden="true">
          <path d="M33 3 2 19l13 3 4 12Z" />
        </svg>
        <svg width="44" height="38" viewBox="0 0 44 38" fill="none" stroke="currentColor" strokeWidth="3" strokeLinecap="round" aria-hidden="true">
          <path d="M2 13v6M7 10v13M42 13v6M37 10v13" />
          <path strokeWidth="4" d="M6 31 35 2M12 20v-6C12 6 16 2 22 2q4 0 6 2M32 13v8l5 9H17" />
          <path fill="currentColor" stroke="none" d="M16 34h12q-2 4-6 4t-6-4Z" />
        </svg>
        <Signal bars={5} />
        <VolteBadge><span>Vo</span><span>LTE</span></VolteBadge>
        <Signal bars={3} />
        <svg width="47" height="36" viewBox="0 0 47 36" fill="none" stroke="currentColor" strokeWidth="5" aria-hidden="true">
          <path d="M2 12q21-20 42 0M9 19q14-13 28 0M15 25q8-7 16 0" />
          <path fill="currentColor" stroke="none" d="m18 29q5-4 10 0l-5 5Z" />
          <path strokeWidth="3" d="M35 26v8M35 33l-4-4M41 35v-9M41 27l4 4" />
        </svg>
        <Battery>
          <BatteryLevel>99</BatteryLevel>
          <BatteryTip />
        </Battery>
      </StatusGroup>
    </StatusBar>
  );
}

export default function App() {
  return (
    <Screen>
      <GlobalStyle />
      <Main>
        <MapView />
        <StatusIcons />
        <BackButton type="button" aria-label="Quay lại">
          <svg width="26" height="42" viewBox="0 0 26 42" fill="none" stroke="#4171ae" strokeWidth="5" aria-hidden="true">
            <path d="M23 2 4 21l19 19" />
          </svg>
        </BackButton>
        <Card>
          <Title>Tạo lộ trình</Title>
          <Steps>
            <Step aria-current="step">
              <StepBadge $active>
                <svg width="40" height="40" viewBox="0 0 40 40" fill="#fff" aria-hidden="true">
                  <path d="m1 39 2-8L28.500 6l4 4L8 35.500ZM30 4.500l2.500-2.500q2-1.500 4 .5t.5 4L34 9Z" />
                </svg>
              </StepBadge>
              <StepName>Chiều đi</StepName>
            </Step>
            <StepLine aria-hidden="true" />
            <Step>
              <StepBadge>2</StepBadge>
              <StepName>Chiều về</StepName>
            </Step>
          </Steps>
          <RouteForm>
            <RouteGrid>
              <RouteTrack aria-hidden="true">
                <Stop />
                <Dot />
                <Dot />
                <Dot />
                <Stop $end />
              </RouteTrack>
              <Fields>
                <Field>
                  <Label htmlFor="from">Điểm đi</Label>
                  <Input id="from" type="text" />
                </Field>
                <Field>
                  <Label htmlFor="to">Điểm đến</Label>
                  <Input id="to" type="text" />
                </Field>
              </Fields>
            </RouteGrid>
            <Submit type="button">Tiếp tục</Submit>
          </RouteForm>
        </Card>
      </Main>
      <NavBar aria-label="Điều hướng hệ thống">
        <NavButton type="button" aria-label="Gần đây">
          <svg width="40" height="40" viewBox="0 0 40 40" aria-hidden="true"><rect width="40" height="40" rx="6" fill="#fff" /></svg>
        </NavButton>
        <NavButton type="button" aria-label="Trang chủ">
          <svg width="54" height="54" viewBox="0 0 54 54" aria-hidden="true">
            <circle cx="27" cy="27" r="24.500" fill="none" stroke="#fff" strokeWidth="5" />
            <circle cx="27" cy="27" r="15" fill="#fff" />
          </svg>
        </NavButton>
        <NavButton type="button" aria-label="Trở lại">
          <svg width="38" height="48" viewBox="0 0 38 48" aria-hidden="true"><path fill="#fff" stroke="#fff" strokeWidth="3" strokeLinejoin="round" d="M36 2v43L2 24Z" /></svg>
        </NavButton>
      </NavBar>
    </Screen>
  );
}
